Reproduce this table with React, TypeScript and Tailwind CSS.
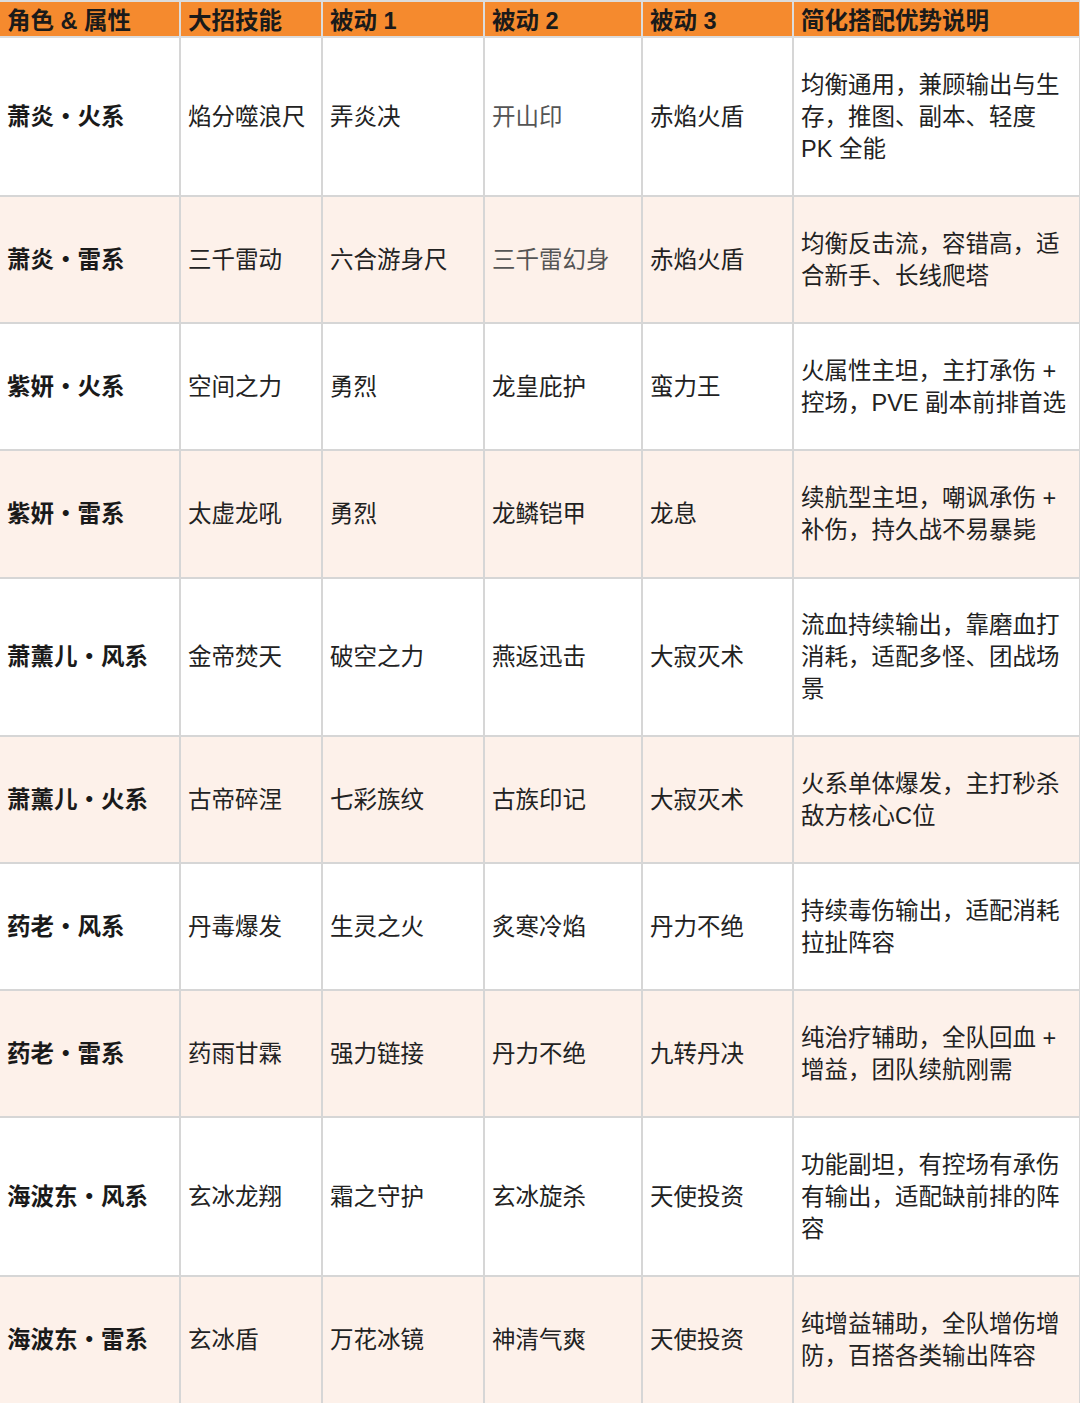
import React from "react"

type Row = {
  role: string
  ult: string
  p1: string
  p2: string
  p3: string
  desc: string
  h: string
  dimP2?: boolean
}

const rows: Row[] = [
  { role: "萧炎・火系", ult: "焰分噬浪尺", p1: "弄炎决", p2: "开山印", p3: "赤焰火盾", desc: "均衡通用，兼顾输出与生存，推图、副本、轻度 PK 全能", h: "h-[159px]", dimP2: true },
  { role: "萧炎・雷系", ult: "三千雷动", p1: "六合游身尺", p2: "三千雷幻身", p3: "赤焰火盾", desc: "均衡反击流，容错高，适合新手、长线爬塔", h: "h-[127px]", dimP2: true },
  { role: "紫妍・火系", ult: "空间之力", p1: "勇烈", p2: "龙皇庇护", p3: "蛮力王", desc: "火属性主坦，主打承伤 + 控场，PVE 副本前排首选", h: "h-[127px]" },
  { role: "紫妍・雷系", ult: "太虚龙吼", p1: "勇烈", p2: "龙鳞铠甲", p3: "龙息", desc: "续航型主坦，嘲讽承伤 + 补伤，持久战不易暴毙", h: "h-[128px]" },
  { role: "萧薰儿・风系", ult: "金帝焚天", p1: "破空之力", p2: "燕返迅击", p3: "大寂灭术", desc: "流血持续输出，靠磨血打消耗，适配多怪、团战场景", h: "h-[158px]" },
  { role: "萧薰儿・火系", ult: "古帝碎涅", p1: "七彩族纹", p2: "古族印记", p3: "大寂灭术", desc: "火系单体爆发，主打秒杀敌方核心C位", h: "h-[127px]" },
  { role: "药老・风系", ult: "丹毒爆发", p1: "生灵之火", p2: "炙寒冷焰", p3: "丹力不绝", desc: "持续毒伤输出，适配消耗拉扯阵容", h: "h-[127px]" },
  { role: "药老・雷系", ult: "药雨甘霖", p1: "强力链接", p2: "丹力不绝", p3: "九转丹决", desc: "纯治疗辅助，全队回血 + 增益，团队续航刚需", h: "h-[127px]" },
  { role: "海波东・风系", ult: "玄冰龙翔", p1: "霜之守护", p2: "玄冰旋杀", p3: "天使投资", desc: "功能副坦，有控场有承伤有输出，适配缺前排的阵容", h: "h-[159px]" },
  { role: "海波东・雷系", ult: "玄冰盾", p1: "万花冰镜", p2: "神清气爽", p3: "天使投资", desc: "纯增益辅助，全队增伤增防，百搭各类输出阵容", h: "h-[128px]" },
]

const headers = ["角色 & 属性", "大招技能", "被动 1", "被动 2", "被动 3", "简化搭配优势说明"]

export default function App() {
  return (
    <div className="w-[1080px] h-[1403px] overflow-hidden bg-white font-['Liberation_Sans','Noto_Sans_CJK_SC',sans-serif] text-[23.5px] leading-[32px] text-[#222]">
      <table className="w-[1080px] table-fixed border-collapse">
        <colgroup>
          <col className="w-[180px]" />
          <col className="w-[142px]" />
          <col className="w-[162px]" />
          <col className="w-[158px]" />
          <col className="w-[151px]" />
          <col className="w-[287px]" />
        </colgroup>
        <thead>
          <tr className="h-[36px] bg-[#f58a2e]">
            {headers.map((t) => (
              <th
                key={t}
                className="border-2 border-[#dcdcdc] first:border-l-0 px-[7px] pt-[3px] pb-0 text-left align-middle font-bold text-[#1a1a1a] leading-[30px]"
              >
                {t}
              </th>
            ))}
          </tr>
        </thead>
        <tbody>
          {rows.map((r, i) => (
            <tr key={r.role} className={`${r.h} ${i % 2 === 1 ? "bg-[#fdf1ea]" : "bg-white"}`}>
              <td className="border-2 border-l-0 border-[#d6d6d6] px-[7px] align-middle font-bold text-[#1a1a1a]">{r.role}</td>
              <td className="border-2 border-[#d6d6d6] px-[7px] align-middle">{r.ult}</td>
              <td className="border-2 border-[#d6d6d6] px-[7px] align-middle">{r.p1}</td>
              <td className={`border-2 border-[#d6d6d6] px-[7px] align-middle ${r.dimP2 ? "text-[#555]" : ""}`}>{r.p2}</td>
              <td className="border-2 border-[#d6d6d6] px-[7px] align-middle">{r.p3}</td>
              <td className="border-2 border-[#d6d6d6] px-[7px] align-middle">{r.desc}</td>
            </tr>
          ))}
        </tbody>
      </table>
    </div>
  )
}
